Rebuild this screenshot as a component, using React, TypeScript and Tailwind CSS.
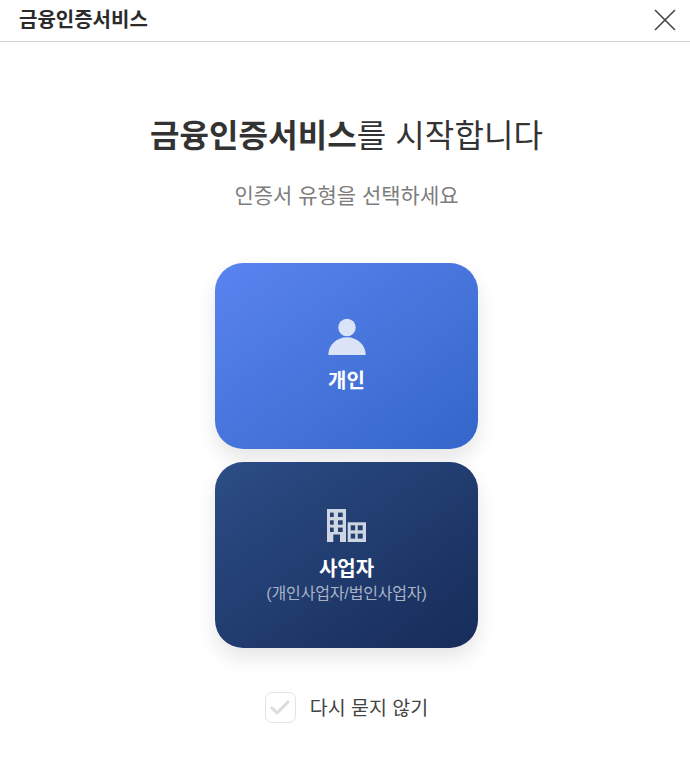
import { Check } from 'lucide-react'

const fontStack = "font-['Liberation_Sans','Noto_Sans_CJK_KR',sans-serif]"

function PersonIcon() {
  return (
    <svg width="38" height="38" viewBox="0 0 38 38" className="block" fill="#dbe3f7">
      <circle cx="19" cy="9.5" r="8.7" />
      <path d="M0.3 37 C0.3 27 8.5 19.2 19 19.2 C29.5 19.2 37.7 27 37.7 37 Z" />
    </svg>
  )
}

function BuildingIcon() {
  return (
    <svg width="39" height="33" viewBox="0 0 39 33" className="block">
      <path fill="#cfd6e3" d="M0 0H19V33H13V25.5H6.3V33H0Z" />
      <path fill="#cfd6e3" d="M20.7 13.3H39V33H20.7Z" />
      <g fill="#26406f">
        <rect x="3" y="3.6" width="3.7" height="4.4" />
        <rect x="11" y="3.6" width="4.7" height="4.4" />
        <rect x="3" y="11.3" width="3.7" height="4.4" />
        <rect x="11" y="11.3" width="4.7" height="4.4" />
        <rect x="3" y="18.6" width="3.7" height="4.4" />
        <rect x="11" y="18.6" width="4.7" height="4.4" />
        <rect x="23.7" y="16.3" width="4.5" height="5" />
        <rect x="30.7" y="16.3" width="5" height="5" />
        <rect x="23.7" y="24.6" width="4.5" height="5" />
        <rect x="30.7" y="24.6" width="5" height="5" />
      </g>
    </svg>
  )
}

export default function App() {
  return (
    <div className={`${fontStack} h-[765px] w-[690px] overflow-hidden bg-white text-[#333]`}>
      {/* Header */}
      <header className="flex h-[42px] items-center justify-between border-b border-[#d4d4d4] pl-[19px] pr-[14px] pb-[2px]">
        <h1 className="text-[20px] font-semibold leading-none text-[#2b2b2b]">금융인증서비스</h1>
        <button>
          <svg width="22" height="22" viewBox="0 0 22 22" className="block" stroke="#444" strokeWidth="1.6" fill="none">
            <path d="M1 1 L21 21 M21 1 L1 21" />
          </svg>
        </button>
      </header>

      <main className="flex flex-col items-center pl-[3px]">
        <h2 className="mt-[72px] text-[32px] leading-[44px] tracking-[0.1px] text-[#333]">
          <span className="font-bold">금융인증서비스</span>를 시작합니다
        </h2>
        <p className="mt-[24px] text-[21px] leading-[28px] text-[#7d7d7d]">인증서 유형을 선택하세요</p>

        <div className="mt-[53px] flex flex-col gap-[13px]">
          <button className="flex h-[186px] w-[263px] flex-col items-center rounded-[28px] bg-gradient-to-br from-[#5a84f0] to-[#3366c8] pt-[55px] shadow-[0_10px_20px_rgba(0,0,0,0.1)]">
            <PersonIcon />
            <span className="mt-[11px] text-[20px] font-bold leading-[28px] text-white">개인</span>
          </button>
          <button className="flex h-[186px] w-[263px] flex-col items-center rounded-[28px] bg-gradient-to-br from-[#2c4d86] to-[#172c59] pt-[47px] shadow-[0_10px_20px_rgba(0,0,0,0.1)]">
            <BuildingIcon />
            <span className="mt-[13px] text-[20px] font-bold leading-[28px] text-white">사업자</span>
            <span className="text-[16px] leading-[22px] tracking-[-0.15px] text-[#a9b4c8]">(개인사업자/법인사업자)</span>
          </button>
        </div>

        <label className="mt-[44px] flex items-center gap-[14px]">
          <span className="flex h-[31px] w-[31px] items-center justify-center rounded-[7px] border border-[#e4e4e4] bg-white">
            <Check className="h-[24px] w-[24px] text-[#dcdcdc]" strokeWidth={3} />
          </span>
          <span className="text-[19.5px] leading-[28px] text-[#444]">다시 묻지 않기</span>
        </label>
      </main>
    </div>
  )
}
